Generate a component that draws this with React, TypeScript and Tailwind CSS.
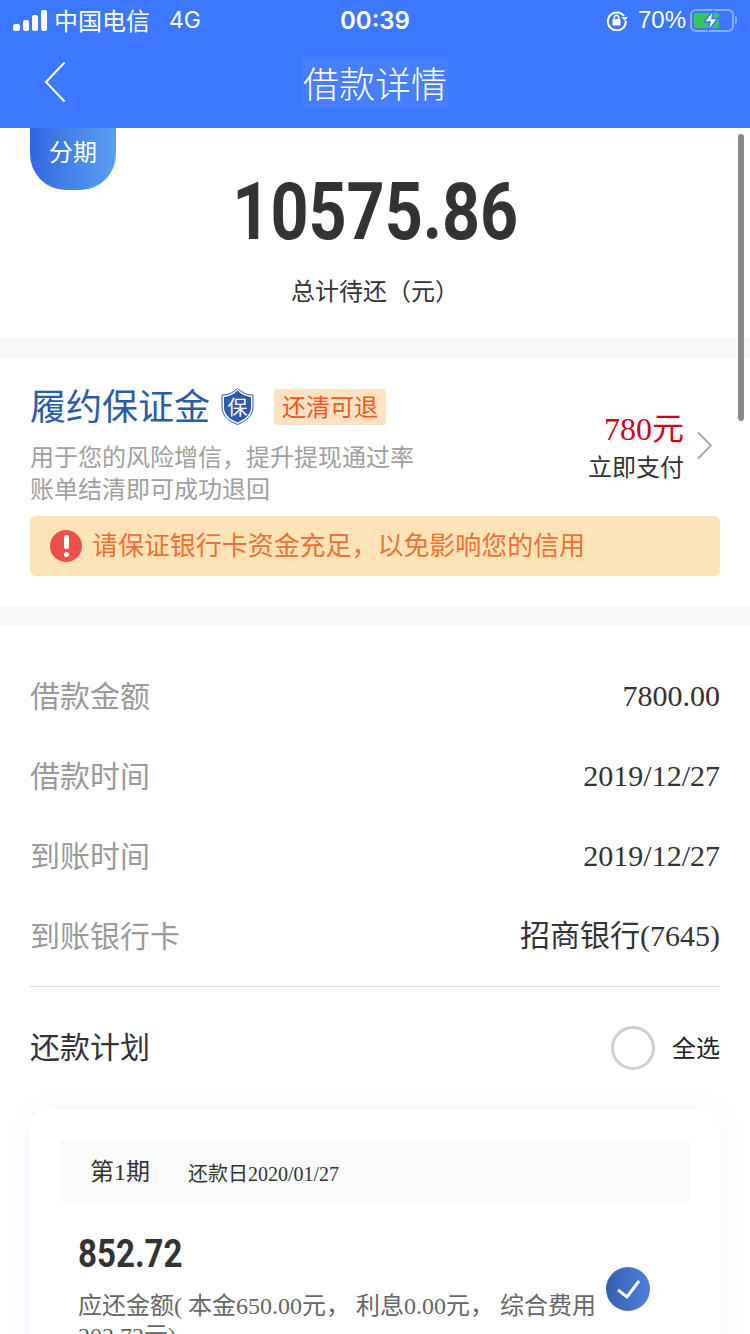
const cjk = "font-['Liberation_Serif','Noto_Sans_CJK_SC',serif]";
const sans = "font-['Noto_Sans_CJK_SC',sans-serif]";
const din = "font-['Roboto','Noto_Sans_CJK_SC',sans-serif]";

function Signal() {
  return (
    <div className="flex items-end gap-[3px] h-[21px]">
      <div className="w-[7px] h-[7px] rounded-[2px] bg-white" />
      <div className="w-[6px] h-[11px] rounded-[2px] bg-white" />
      <div className="w-[6px] h-[16px] rounded-[2px] bg-white" />
      <div className="w-[6px] h-[21px] rounded-[2px] bg-white" />
    </div>
  );
}

function RotationLock() {
  return (
    <svg width="22" height="22" viewBox="0 0 22 22" fill="none">
      <path d="M18 7A9 9 0 1 0 19.800 12" stroke="white" strokeWidth="2" />
      <path d="M15.500 8h6.500L18.800 12z" fill="white" />
      <rect x="6.500" y="10" width="8" height="6.500" rx="1" fill="white" />
      <path d="M8.300 10V8.400a2.200 2.200 0 0 1 4.400 0V10" stroke="white" strokeWidth="1.400" />
    </svg>
  );
}

function Battery() {
  return (
    <div className="flex items-center gap-[1px]">
      <div className="relative w-[44px] h-[23px] rounded-[6px] border-2 border-white/40 p-[2px]">
        <div className="w-[70%] h-full rounded-[2px] bg-[#34c759]" />
        <svg className="absolute left-[9px] top-[-2px]" width="20" height="23" viewBox="0 0 20 23">
          <path d="M12.500 1 3 13h6l-2 9 10-12.500h-6z" fill="white" stroke="#3c78fe" strokeWidth="1.500" />
        </svg>
      </div>
      <div className="w-[2px] h-[8px] rounded-r-sm bg-white/40" />
    </div>
  );
}

function Shield() {
  return (
    <div className="relative w-[33px] h-[37px]">
      <svg width="33" height="37" viewBox="0 0 33 37">
        <path d="M16.500 0.500 21 4c3 2 7 3 11 3v12c0 8-6 14-15.500 17.500C7 33 1 27 1 19V7c4 0 8-1 11-3z" fill="#fff" stroke="#2b5bab" strokeWidth="1" />
        <path d="M16.500 2.500 20 5.500c3 2 6 3 10 3.500V19c0 7-5 12-13.500 15.500C8 31 3 26 3 19V9c4-.5 7-1.500 10-3.500z" fill="#2b5bab" />
      </svg>
      <span className={`absolute inset-0 flex items-center justify-center text-[20px] text-white ${sans}`}>保</span>
    </div>
  );
}

function InfoRow({ label, value }: { label: string; value: string }) {
  return (
    <div className="flex items-center justify-between h-20 px-[30px]">
      <span className={`pb-[4px] text-[30px] text-[#9a9a9a] ${sans}`}>{label}</span>
      <span className={`pb-[2px] text-[30px] text-[#333] ${cjk}`}>{value}</span>
    </div>
  );
}

export default function App() {
  return (
    <div className="relative w-[750px] h-[1334px] overflow-hidden bg-white">
      {/* Status bar + nav */}
      <div className="bg-[#3c78fe] text-white">
        <div className="grid grid-cols-3 items-center h-10 pl-[13px] pr-[13px]">
          <div className={`flex items-center gap-[6px] text-[24px] ${sans}`}>
            <Signal />
            <span className="ml-[1px]">中国电信</span>
            <span className="ml-[13px] font-['Inter',sans-serif] text-[23px]">4G</span>
          </div>
          <div className="pt-[2px] text-center font-['Inter',sans-serif] font-semibold text-[24px]">00:39</div>
          <div className="flex items-center justify-end font-['Liberation_Sans',sans-serif] text-[24px]">
            <RotationLock />
            <span className="ml-[10px] mr-[4px]">70%</span>
            <Battery />
          </div>
        </div>
        <div className="relative flex items-center justify-center h-[88px]">
          <svg className="absolute left-[44px] top-[21px]" width="22" height="42" viewBox="0 0 22 42" fill="none">
            <path d="M20.500 1.500 2 21l18.500 19.500" stroke="white" strokeWidth="2" />
          </svg>
          <span className={`-mt-[4px] px-[1px] h-[50px] leading-[50px] bg-white/5 text-[36px] font-light ${sans}`}>借款详情</span>
        </div>
      </div>

      {/* Amount */}
      <section className="relative h-[210px] flex flex-col items-center">
        <div className={`absolute left-[30px] top-0 w-[86px] h-[62px] rounded-b-[36px] bg-gradient-to-r from-[#3566e0] to-[#5ba0f2] flex items-center justify-center pb-[16px] text-white text-[24px] ${sans}`}>分期</div>
        <div className={`mt-[37px] h-[94px] leading-[94px] text-[80px] font-bold text-[#333] scale-x-[0.83] ${din}`}>10575.86</div>
        <div className={`mt-[13px] text-[24px] leading-[36px] text-[#333] ${sans}`}>总计待还（元）</div>
      </section>
      <div className="h-5 bg-[#f7f7f9]" />

      {/* Deposit */}
      <section className="h-[248px] px-[30px] pt-[30px]">
        <div className="flex justify-between">
          <div>
            <div className="flex items-center h-[37px]">
              <span className={`pb-[4px] text-[36px] leading-[37px] text-[#2b5bab] ${sans}`}>履约保证金</span>
              <div className="ml-[11px]"><Shield /></div>
              <span className={`ml-[20px] w-[112px] h-[36px] rounded-[4px] bg-[#fde3c4] text-center text-[24px] leading-[34px] text-[#f4581c] ${sans}`}>还清可退</span>
            </div>
            <div className={`mt-[15px] text-[24px] leading-[32px] text-[#a0a0a0] ${sans}`}>
              <div>用于您的风险增信，提升提现通过率</div>
              <div>账单结清即可成功退回</div>
            </div>
          </div>
          <div className="flex items-center mt-[21px] h-[72px]">
            <div className="flex flex-col items-end">
              <span className={`text-[32px] leading-[42px] text-[#d0021b] ${cjk}`}>780元</span>
              <span className={`text-[24px] leading-[32px] text-[#333] ${sans}`}>立即支付</span>
            </div>
            <svg className="ml-[12px] mr-[7px]" width="17" height="29" viewBox="0 0 17 29" fill="none">
              <path d="M2 1.500 15 14.500 2 27.500" stroke="#a6a6a6" strokeWidth="1.800" />
            </svg>
          </div>
        </div>
        <div className="mt-[12px] flex items-center h-[60px] pl-[20px] rounded-[6px] bg-[#fee3b6]">
          <div className="w-8 h-8 rounded-full bg-[#ee4f47] flex flex-col items-center justify-center gap-[3px]">
            <div className="w-[5px] h-[14px] rounded-[2px] bg-white" />
            <div className="w-[5px] h-[5px] rounded-full bg-white" />
          </div>
          <span className={`ml-[10px] pb-[5px] text-[26px] tracking-[-0.05px] text-[#ee7133] ${sans}`}>请保证银行卡资金充足，以免影响您的信用</span>
        </div>
      </section>
      <div className="h-5 bg-[#f7f7f9]" />

      {/* Details */}
      <section className="pt-[30px]">
        <InfoRow label="借款金额" value="7800.00" />
        <InfoRow label="借款时间" value="2019/12/27" />
        <InfoRow label="到账时间" value="2019/12/27" />
        <InfoRow label="到账银行卡" value="招商银行(7645)" />
        <div className="mx-[30px] mt-[10px] border-t border-[#dcdcdc]" />
        <div className="flex items-center justify-between h-[120px] px-[30px]">
          <span className={`pb-[4px] text-[30px] text-[#333] ${sans}`}>还款计划</span>
          <div className="flex items-center gap-[17px]">
            <div className="mt-[2px] w-11 h-11 rounded-full border-[3px] border-[#cfcfcf]" />
            <span className={`text-[24px] text-[#222] ${sans}`}>全选</span>
          </div>
        </div>
      </section>

      {/* Plan card */}
      <div className="mx-[30px] mt-[3px] rounded-[20px] bg-white p-[30px] shadow-[0_0_30px_rgba(60,90,200,0.07)]">
        <div className="flex items-center h-[63px] pl-[30px] bg-[#fafafa]">
          <span className={`text-[24px] text-[#333] ${cjk}`}>第1期</span>
          <span className={`ml-[38px] pt-[4px] text-[20px] text-[#333] ${cjk}`}>还款日2020/01/27</span>
        </div>
        <div className="relative pl-[18px] pr-[70px]">
          <div className={`mt-[26px] text-[38px] leading-[50px] font-bold text-[#333] origin-left scale-x-[0.87] ${din}`}>852.72</div>
          <div className={`mt-[12px] text-[24px] leading-[30px] text-[#666] ${cjk}`}>应还金额( 本金650.00元， 利息0.00元， 综合费用202.72元)</div>
          <div className="absolute right-[40px] top-[38px] w-11 h-11 rounded-full bg-gradient-to-r from-[#3560b0] to-[#4d7fdc]">
            <svg width="44" height="44" viewBox="0 0 44 44" fill="none">
              <path d="M12 23l9 7 12-16" stroke="white" strokeWidth="3" />
            </svg>
          </div>
        </div>
      </div>

      {/* Scroll indicator */}
      <div className="absolute left-[738px] top-[134px] w-[6px] h-[287px] rounded-full bg-[#8a8a8a]" />
    </div>
  );
}
